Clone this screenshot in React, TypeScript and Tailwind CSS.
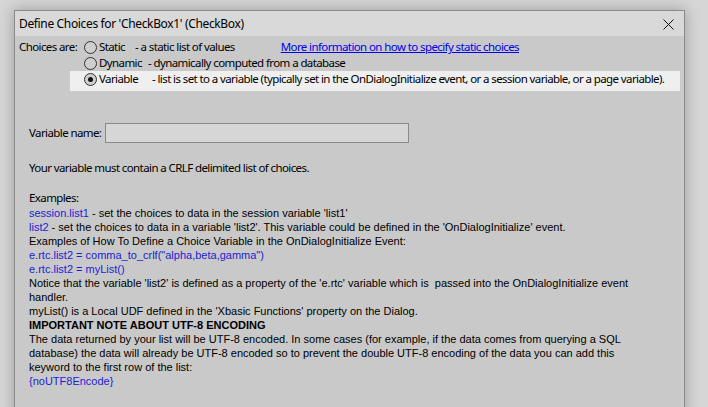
import React from "react";

const title = { fontFamily: '"Noto Sans", "Open Sans", sans-serif', letterSpacing: "-0.35px" };
const seg = { fontFamily: '"Noto Sans", "Open Sans", sans-serif', letterSpacing: "-0.6px" };
const arial = { fontFamily: '"Liberation Sans", Arial, sans-serif', letterSpacing: "0px" };

function Radio({ checked }: { checked?: boolean }) {
  return (
    <span className="relative inline-block w-[13px] h-[13px] rounded-full border border-[#333333] bg-[#cfcfcf] shrink-0">
      {checked && (
        <span className="absolute left-[3px] top-[3px] w-[5px] h-[5px] rounded-full bg-[#111111]" />
      )}
    </span>
  );
}

export default function App() {
  return (
    <div className="w-[708px] h-[407px] overflow-hidden bg-[#d6d6d6] pl-[14px] pt-[10px]">
      <div className="w-[671px] h-[420px] border border-[#8a8a8a] bg-[#c9c9c9] shadow-[0_0_14px_rgba(0,0,0,0.28)] whitespace-nowrap">
        {/* Title bar */}
        <div className="h-[25px] bg-[#d9d9d9] flex items-center justify-between pl-[4px] pr-[10px]">
          <span className="text-[12px] text-black leading-none" style={title}>
            Define Choices for 'CheckBox1' (CheckBox)
          </span>
          <svg width="11" height="11" viewBox="0 0 11 11" className="mt-[1px]">
            <path d="M0.5 0.5 L10.5 10.5 M10.5 0.5 L0.5 10.5" stroke="#111" strokeWidth="1" />
          </svg>
        </div>

        {/* Body */}
        <div className="pt-[3px] text-[11.5px] text-black" style={seg}>
          <div className="h-[16px] flex items-center pl-[4px]">
            <span className="w-[65px]">Choices are:</span>
            <Radio />
            <span className="ml-[2px] w-[36px]">Static</span>
            <span>- a static list of values</span>
            <span className="ml-auto mr-[165px] text-[#0000ee] underline">
              More information on how to specify static choices
            </span>
          </div>
          <div className="h-[16px] flex items-center pl-[69px]">
            <Radio />
            <span className="ml-[2px] w-[49px]">Dynamic</span>
            <span>- dynamically computed from a database</span>
          </div>
          <div className="ml-[55px] w-[610px] h-[20px] bg-[#efefef] pl-[14px] pb-[4px]">
            <div className="h-[16px] flex items-center">
              <Radio checked />
              <span className="ml-[2px] w-[53px]">Variable</span>
              <span>
                - list is set to a variable (typically set in the OnDialogInitialize event, or a session variable, or a page variable).
              </span>
            </div>
          </div>

          <div className="pl-[14px]">
            <div className="mt-[32px] flex items-center h-[20px]">
              <span className="w-[76px]">Variable name:</span>
              <div className="w-[304px] h-[20px] border border-[#8a8a8a] bg-[#d6d6d6]" />
            </div>
            <div className="mt-[17px] h-[16px] flex items-center">
              Your variable must contain a CRLF delimited list of choices.
            </div>
            <div className="mt-[14px] h-[16px] flex items-center">Examples:</div>
          </div>

          <div className="pl-[14px] text-[11px] leading-[14px] text-black whitespace-pre" style={arial}>
            <div><span className="text-[#1c1cd6]">session.list1</span> - set the choices to data in the session variable 'list1'</div>
            <div><span className="text-[#1c1cd6]">list2</span> - set the choices to data in a variable 'list2'. This variable could be defined in the 'OnDialogInitialize' event.</div>
            <div>Examples of How To Define a Choice Variable in the OnDialogInitialize Event:</div>
            <div className="text-[#1c1cd6]">e.rtc.list2 = comma_to_crlf("alpha,beta,gamma")</div>
            <div className="text-[#1c1cd6]">e.rtc.list2 = myList()</div>
            <div>Notice that the variable 'list2' is defined as a property of the 'e.rtc' variable which is  passed into the OnDialogInitialize event</div>
            <div>handler.</div>
            <div>myList() is a Local UDF defined in the 'Xbasic Functions' property on the Dialog.</div>
            <div className="font-bold">IMPORTANT NOTE ABOUT UTF-8 ENCODING</div>
            <div>The data returned by your list will be UTF-8 encoded. In some cases (for example, if the data comes from querying a SQL</div>
            <div>database) the data will already be UTF-8 encoded so to prevent the double UTF-8 encoding of the data you can add this</div>
            <div>keyword to the first row of the list:</div>
            <div className="text-[#1c1cd6]">{"{noUTF8Encode}"}</div>
          </div>
        </div>
      </div>
    </div>
  );
}
